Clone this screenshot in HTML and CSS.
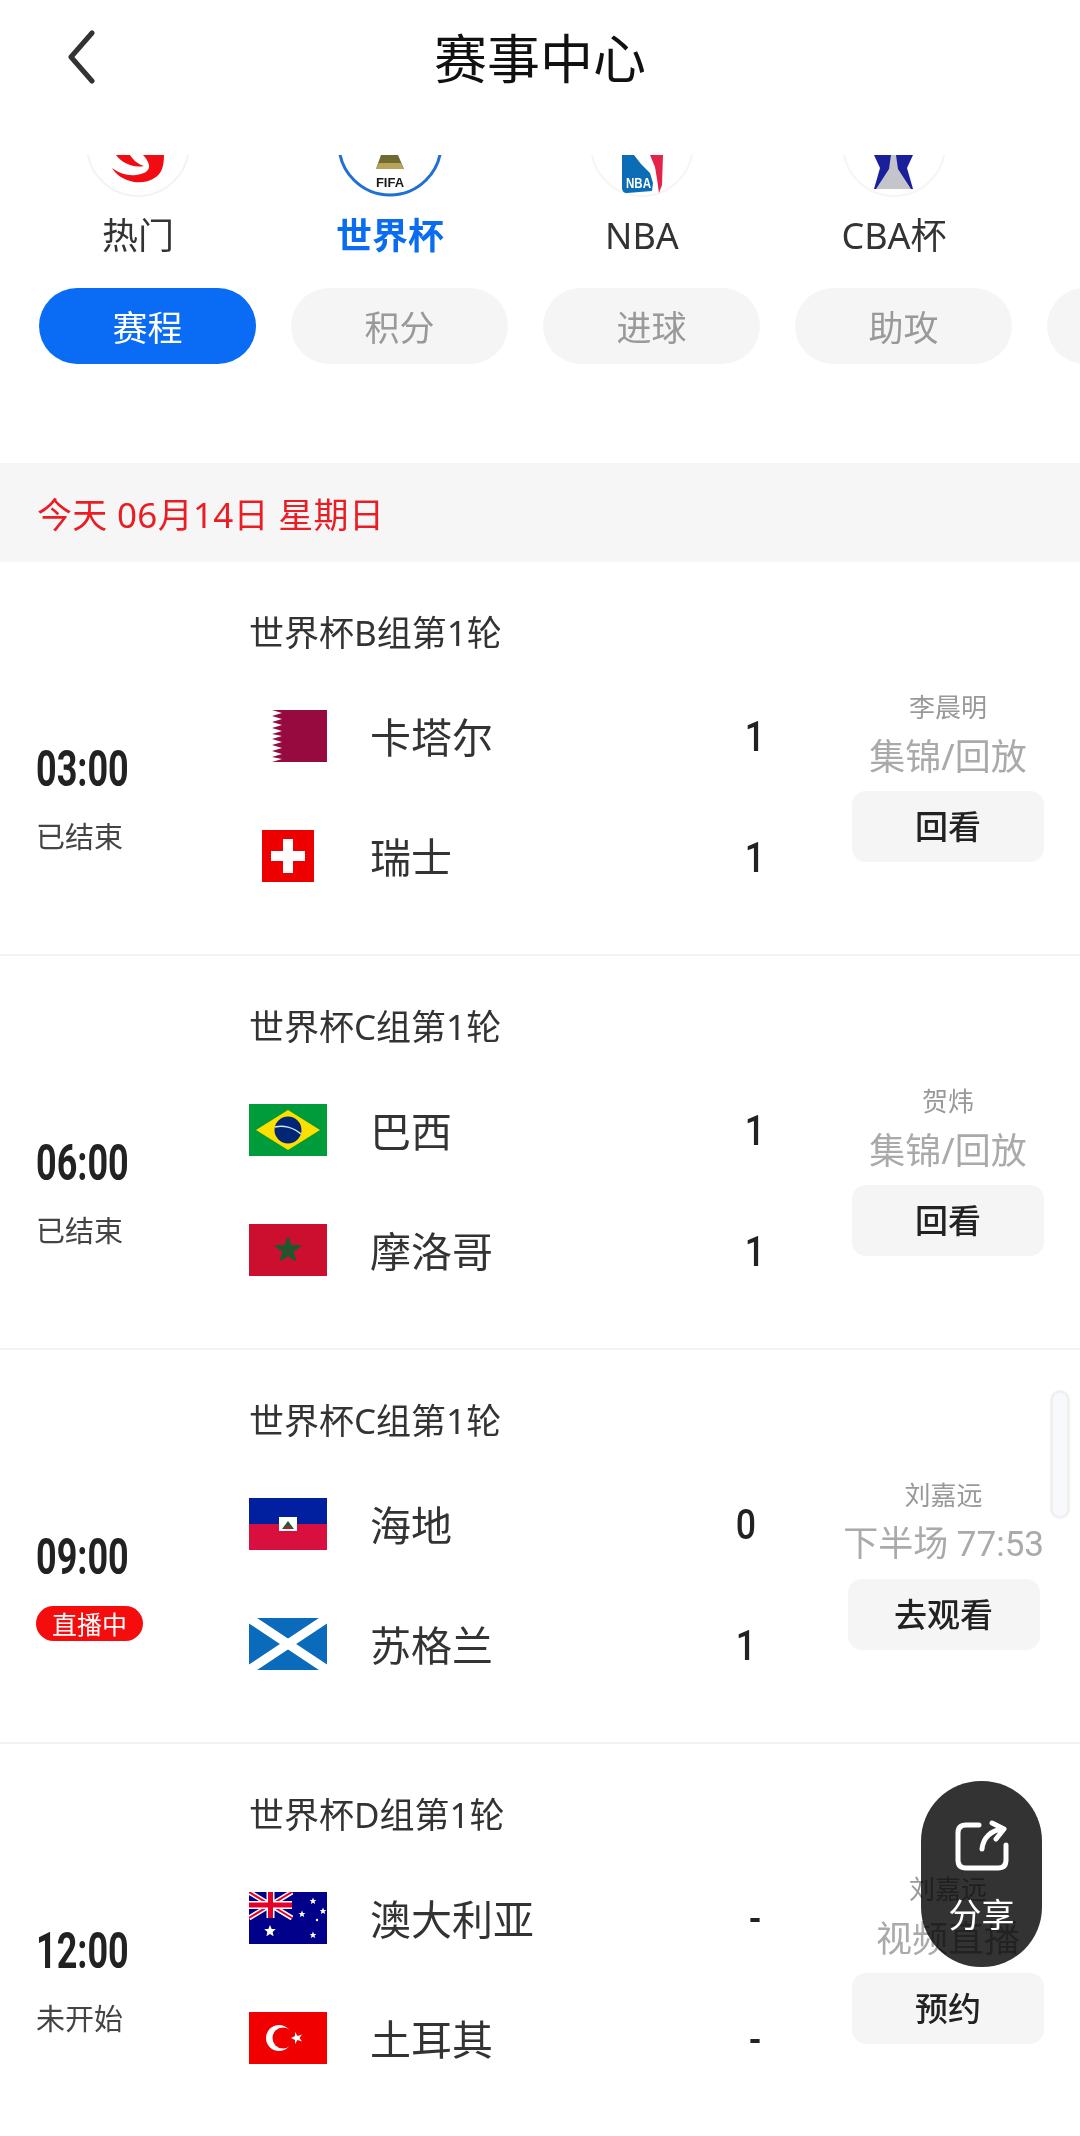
FILE: index.html
```html
<!DOCTYPE html>
<html lang="zh-CN">
<head>
    <meta charset="UTF-8">
    <meta name="viewport" content="width=device-width, initial-scale=1.0">
    <title>赛事中心</title>
    <link rel="stylesheet" href="styles.css">
</head>
<body>
    <div class="page">
        <header class="topbar">
            <svg class="back" width="30" height="54" viewBox="0 0 30 54"><path d="M26 3 L5 27 L26 51" fill="none" stroke="#333" stroke-width="5" stroke-linecap="round" stroke-linejoin="round"/></svg>
            <h1 class="title">赛事中心</h1>
        </header>

        <nav class="leagues">
            <div class="league">
                <div class="logo-clip">
                    <svg class="logo" width="104" height="104" viewBox="0 0 104 104">
                        <circle cx="52" cy="52" r="51" fill="#fff" stroke="#f3f3f3" stroke-width="2"/>
                        <path d="M26 75 C34 81 42 83 50 82 C58 81 64 78 63 72 C62 68 60 65 57 62 H78 C78 72 76 80 70 84 C63 89 55 90 48 89 C38 87 30 82 26 75 Z" fill="#f00c12"/>
                        <path d="M30 62 H44 C47 67 52 71 58 73 C48 75 37 71 30 62 Z" fill="#f00c12"/>
                    </svg>
                </div>
                <span class="league-name">热门</span>
            </div>
            <div class="league active">
                <div class="logo-clip">
                    <svg class="logo" width="106" height="106" viewBox="0 0 106 106">
                        <circle cx="53" cy="53" r="51" fill="#fff" stroke="#1f6fd6" stroke-width="3"/>
                        <path d="M44 64 H61 L67 78 H39 Z" fill="#6d6b2f"/>
                        <path d="M42 72 H64 L67 78 H39 Z" fill="#b9a25a"/>
                        <text x="53" y="96" class="fifa-text">FIFA</text>
                    </svg>
                </div>
                <span class="league-name">世界杯</span>
            </div>
            <div class="league">
                <div class="logo-clip">
                    <svg class="logo" width="104" height="104" viewBox="0 0 104 104">
                        <circle cx="52" cy="52" r="51" fill="#fff" stroke="#f5f5f3" stroke-width="2"/>
                        <path d="M32 62 H44 L51 71 L60 80 L63 90 L62 98 L37 100 C34 100 32 98 32 95 Z" fill="#0a6db5"/>
                        <path d="M60 62 H73 L72 92 L69 100 L67 86 L65 74 Z" fill="#e4234a"/>
                        <text x="36" y="95" class="nba-text" textLength="25" lengthAdjust="spacingAndGlyphs">NBA</text>
                    </svg>
                </div>
                <span class="league-name">NBA</span>
            </div>
            <div class="league">
                <div class="logo-clip">
                    <svg class="logo" width="104" height="104" viewBox="0 0 104 104">
                        <circle cx="52" cy="52" r="51" fill="#fff" stroke="#f5f5f3" stroke-width="2"/>
                        <path d="M32 62 H71 L65 75 L71 96 H32 L38 75 Z" fill="#1a1f9c"/>
                        <path d="M49 62 H54 L56 76 L69 96 H34 L47 76 Z" fill="#c3c5cb"/>
                    </svg>
                </div>
                <span class="league-name">CBA杯</span>
            </div>
        </nav>

        <div class="tabs">
            <div class="tab active">赛程</div>
            <div class="tab">积分</div>
            <div class="tab">进球</div>
            <div class="tab">助攻</div>
            <div class="tab"></div>
        </div>

        <div class="date-strip">今天 06月14日 星期日</div>

        <section class="match">
            <div class="time-col">
                <div class="time">03:00</div>
                <div class="status">已结束</div>
            </div>
            <div class="teams">
                <div class="round">世界杯B组第1轮</div>
                <div class="team">
                    <div class="flag">
                        <svg width="78" height="52" viewBox="0 0 78 52">
                            <rect width="78" height="52" fill="#fff"/>
                            <path d="M78 0 H23 L33 3 L23 6 L33 9 L23 12 L33 15 L23 18 L33 21 L23 24 L33 26 L23 29 L33 32 L23 35 L33 38 L23 41 L33 44 L23 47 L33 49 L23 52 H78 Z" fill="#960a3f"/>
                        </svg>
                    </div>
                    <span class="team-name">卡塔尔</span>
                    <span class="score">1</span>
                </div>
                <div class="team">
                    <div class="flag">
                        <svg width="52" height="52" viewBox="0 0 52 52">
                            <rect width="52" height="52" fill="#ee0000"/>
                            <path d="M21 9 H31 V21 H43 V31 H31 V43 H21 V31 H9 V21 H21 Z" fill="#fff"/>
                        </svg>
                    </div>
                    <span class="team-name">瑞士</span>
                    <span class="score">1</span>
                </div>
            </div>
            <div class="side">
                <div class="host">李晨明</div>
                <div class="side-status">集锦/回放</div>
                <div class="side-btn">回看</div>
            </div>
        </section>

        <section class="match">
            <div class="time-col">
                <div class="time">06:00</div>
                <div class="status">已结束</div>
            </div>
            <div class="teams">
                <div class="round">世界杯C组第1轮</div>
                <div class="team">
                    <div class="flag">
                        <svg width="78" height="52" viewBox="0 0 78 52">
                            <rect width="78" height="52" fill="#009b3a"/>
                            <path d="M39 6 L71 26 L39 46 L7 26 Z" fill="#fedf00"/>
                            <circle cx="39" cy="26" r="13.5" fill="#002776"/>
                            <path d="M26 23 C34 21 44 23 52 30" fill="none" stroke="#d8e6f5" stroke-width="1.5"/>
                        </svg>
                    </div>
                    <span class="team-name">巴西</span>
                    <span class="score">1</span>
                </div>
                <div class="team">
                    <div class="flag">
                        <svg width="78" height="52" viewBox="0 0 78 52">
                            <rect width="78" height="52" fill="#cc0f2f"/>
                            <path d="M39 14 L46 36 L27 22 H51 L32 36 Z" fill="#3b4a22" stroke="#0f5f34" stroke-width="2" stroke-linejoin="round"/>
                        </svg>
                    </div>
                    <span class="team-name">摩洛哥</span>
                    <span class="score">1</span>
                </div>
            </div>
            <div class="side">
                <div class="host">贺炜</div>
                <div class="side-status">集锦/回放</div>
                <div class="side-btn">回看</div>
            </div>
        </section>

        <section class="match">
            <div class="time-col">
                <div class="time">09:00</div>
                <div class="status"><span class="live">直播中</span></div>
            </div>
            <div class="teams">
                <div class="round">世界杯C组第1轮</div>
                <div class="team">
                    <div class="flag">
                        <svg width="78" height="52" viewBox="0 0 78 52">
                            <rect width="78" height="26" fill="#00209f"/>
                            <rect y="26" width="78" height="26" fill="#d8103f"/>
                            <rect x="30" y="19" width="18" height="14" fill="#fff"/>
                            <path d="M33 31 L39 23 L45 31 Z" fill="#1d5e34"/>
                            <rect x="36" y="28" width="6" height="3" fill="#9c2a2a"/>
                        </svg>
                    </div>
                    <span class="team-name">海地</span>
                    <span class="score">0</span>
                </div>
                <div class="team">
                    <div class="flag">
                        <svg width="78" height="52" viewBox="0 0 78 52">
                            <rect width="78" height="52" fill="#0a6bbd"/>
                            <path d="M0 0 L78 52 M78 0 L0 52" stroke="#fff" stroke-width="9"/>
                        </svg>
                    </div>
                    <span class="team-name">苏格兰</span>
                    <span class="score">1</span>
                </div>
            </div>
            <div class="side">
                <div class="host">刘嘉远</div>
                <div class="side-status wide">下半场 77:53</div>
                <div class="side-btn">去观看</div>
            </div>
        </section>

        <section class="match last">
            <div class="time-col">
                <div class="time">12:00</div>
                <div class="status">未开始</div>
            </div>
            <div class="teams">
                <div class="round">世界杯D组第1轮</div>
                <div class="team">
                    <div class="flag">
                        <svg width="78" height="52" viewBox="0 0 78 52">
                            <defs>
                                <path id="au-star" d="M0 -5 L1.4 -1.6 L4.8 -1.6 L2.2 .8 L3 4.4 L0 2.4 L-3 4.4 L-2.2 .8 L-4.8 -1.6 L-1.4 -1.6 Z" fill="#fff"/>
                            </defs>
                            <rect width="78" height="52" fill="#00008b"/>
                            <path d="M0 0 L43 26 M43 0 L0 26" stroke="#fff" stroke-width="5"/>
                            <path d="M0 0 L43 26 M43 0 L0 26" stroke="#e4002b" stroke-width="2"/>
                            <path d="M21.5 0 V26 M0 13 H43" stroke="#fff" stroke-width="8"/>
                            <path d="M21.5 0 V26 M0 13 H43" stroke="#e4002b" stroke-width="5"/>
                            <use href="#au-star" transform="translate(21 39) scale(1.2)"/>
                            <use href="#au-star" transform="translate(64 9) scale(.7)"/>
                            <use href="#au-star" transform="translate(53 22) scale(.7)"/>
                            <use href="#au-star" transform="translate(74 19) scale(.7)"/>
                            <circle cx="68" cy="28" r="1.2" fill="#fff"/>
                            <use href="#au-star" transform="translate(64 43) scale(.7)"/>
                        </svg>
                    </div>
                    <span class="team-name">澳大利亚</span>
                    <span class="score">-</span>
                </div>
                <div class="team">
                    <div class="flag">
                        <svg width="78" height="52" viewBox="0 0 78 52">
                            <rect width="78" height="52" fill="#f00000"/>
                            <circle cx="30" cy="26" r="13" fill="#fff"/>
                            <circle cx="34" cy="26" r="10.5" fill="#f00000"/>
                            <path d="M46 20 L48.5 24 L53 22.5 L50.5 26 L53 29.5 L48.5 28 L46 32 L46 28 L42 26 L46 24 Z" fill="#fff"/>
                        </svg>
                    </div>
                    <span class="team-name">土耳其</span>
                    <span class="score">-</span>
                </div>
            </div>
            <div class="side">
                <div class="host">刘嘉远</div>
                <div class="side-status">视频直播</div>
                <div class="side-btn">预约</div>
            </div>
        </section>

        <div class="scroll-thumb"></div>

        <div class="share">
            <svg class="share-icon" width="54" height="52" viewBox="0 0 54 52"><path d="M24 5 H11 Q3 5 3 13 V40 Q3 48 11 48 H43 Q51 48 51 40 V25" fill="none" stroke="#fff" stroke-width="5" stroke-linecap="round"/><path d="M27 29 C28 18 36 10 48 9 M37 3 L49 9 L41 19" fill="none" stroke="#fff" stroke-width="5" stroke-linecap="round" stroke-linejoin="round"/></svg>
            <span class="share-text">分享</span>
        </div>
    </div>
</body>
</html>
```

FILE: styles.css
```css
* {
    box-sizing: border-box;
}

body {
    margin: 0;
    background: #fff;
    font-family: "Noto Sans", "Noto Sans CJK SC", sans-serif;
    color: #222;
}

.page {
    position: relative;
    width: 1080px;
    height: 2136px;
    overflow: hidden;
    background: #fff;
}

.topbar {
    position: relative;
    height: 116px;
    padding-bottom: 4px;
    display: flex;
    align-items: center;
    justify-content: center;
}

.back {
    position: absolute;
    left: 66px;
    top: 30px;
}

.title {
    margin: 0;
    font-size: 53px;
    font-weight: 400;
    color: #111;
}

.leagues {
    display: flex;
    margin-top: 39px;
    padding-left: 12px;
}

.league {
    width: 252px;
    display: flex;
    flex-direction: column;
    align-items: center;
}

.logo-clip {
    width: 106px;
    height: 42px;
    overflow: hidden;
    display: flex;
    align-items: flex-end;
    justify-content: center;
}

.logo {
    flex-shrink: 0;
    display: block;
}

.fifa-text {
    font-family: "Liberation Sans", sans-serif;
    font-size: 13px;
    font-weight: 700;
    text-anchor: middle;
    fill: #1a1a1a;
}

.nba-text {
    font-family: "Liberation Sans", sans-serif;
    font-size: 15px;
    font-weight: 700;
    fill: #fff;
}

.league-name {
    margin-top: 14px;
    font-size: 36px;
    line-height: 50px;
    white-space: nowrap;
    color: #333;
}

.league.active .league-name {
    color: #0a6cf0;
    font-weight: 700;
}

.tabs {
    display: flex;
    gap: 35px;
    margin-top: 27px;
    padding-left: 39px;
}

.tab {
    flex: 0 0 217px;
    height: 76px;
    padding-bottom: 2px;
    border-radius: 38px;
    background: #f5f5f5;
    color: #999;
    font-size: 35px;
    display: flex;
    align-items: center;
    justify-content: center;
}

.tab.active {
    background: #0a6cf5;
    color: #fff;
}

.date-strip {
    margin-top: 99px;
    height: 99px;
    padding-left: 37px;
    background: #f6f6f6;
    color: #ea1c24;
    font-size: 35px;
    letter-spacing: .3px;
    display: flex;
    align-items: center;
}

.match {
    display: flex;
    height: 394px;
    border-bottom: 2px solid #f2f2f2;
}

.match.last {
    border-bottom: none;
}

.time-col {
    width: 249px;
    padding: 177px 0 0 36px;
}

.time {
    font-family: Roboto, sans-serif;
    font-size: 50px;
    font-weight: 700;
    line-height: 60px;
    color: #222;
    transform: scaleX(.72);
    transform-origin: left center;
}

.status {
    margin-top: 11px;
    height: 50px;
    display: flex;
    align-items: center;
    font-size: 29px;
    color: #444;
}

.live {
    width: 107px;
    height: 35px;
    border-radius: 18px;
    background: #f50c0c;
    color: #fff;
    font-size: 25px;
    display: flex;
    align-items: center;
    justify-content: center;
}

.teams {
    flex: 1;
    padding-top: 46px;
}

.round {
    height: 50px;
    line-height: 50px;
    font-size: 35px;
    color: #333;
}

.team {
    height: 120px;
    display: flex;
    align-items: center;
}

.round + .team {
    margin-top: 18px;
}

.flag {
    width: 78px;
    display: flex;
    justify-content: center;
}

.flag svg {
    display: block;
}

.team-name {
    flex: 1;
    margin-left: 43px;
    margin-bottom: 2px;
    font-size: 41px;
    color: #333;
}

.score {
    width: 36px;
    margin-right: 79px;
    text-align: center;
    font-family: Roboto, sans-serif;
    font-size: 42px;
    font-weight: 500;
    transform: scaleX(.85);
}

.team + .team .score {
    margin-top: 3px;
}

.side {
    min-width: 192px;
    margin-right: 36px;
    padding-top: 120px;
    display: flex;
    flex-direction: column;
    align-items: center;
}

.host {
    height: 50px;
    line-height: 50px;
    font-size: 26px;
    color: #999;
}

.side-status {
    height: 48px;
    line-height: 48px;
    margin-top: 1px;
    font-size: 36px;
    color: #aaa;
    white-space: nowrap;
}

.side-status.wide {
    font-family: Roboto, "Noto Sans CJK SC", sans-serif;
    font-size: 35px;
}

.side-btn {
    margin-top: 10px;
    width: 192px;
    height: 71px;
    padding-bottom: 4px;
    border-radius: 14px;
    background: #f5f5f5;
    color: #222;
    font-size: 33px;
    font-weight: 500;
    display: flex;
    align-items: center;
    justify-content: center;
}

.scroll-thumb {
    position: absolute;
    left: 1050px;
    top: 1390px;
    width: 20px;
    height: 129px;
    border-radius: 10px;
    background: #f8f9fc;
    border: 3px solid #f0f0f0;
}

/* the dark pill lets the page text show through, a bit darker than itself */
.share {
    position: absolute;
    left: 921px;
    top: 1781px;
    width: 121px;
    height: 186px;
    display: flex;
    flex-direction: column;
    align-items: center;
    padding-top: 39px;
}

.share::before {
    content: "";
    position: absolute;
    inset: 0;
    border-radius: 60px;
    background: #333;
    mix-blend-mode: multiply;
}

.share-icon {
    position: relative;
}

.share-text {
    position: relative;
    margin-top: 18px;
    color: #fff;
    font-size: 33px;
    line-height: 50px;
}
```
